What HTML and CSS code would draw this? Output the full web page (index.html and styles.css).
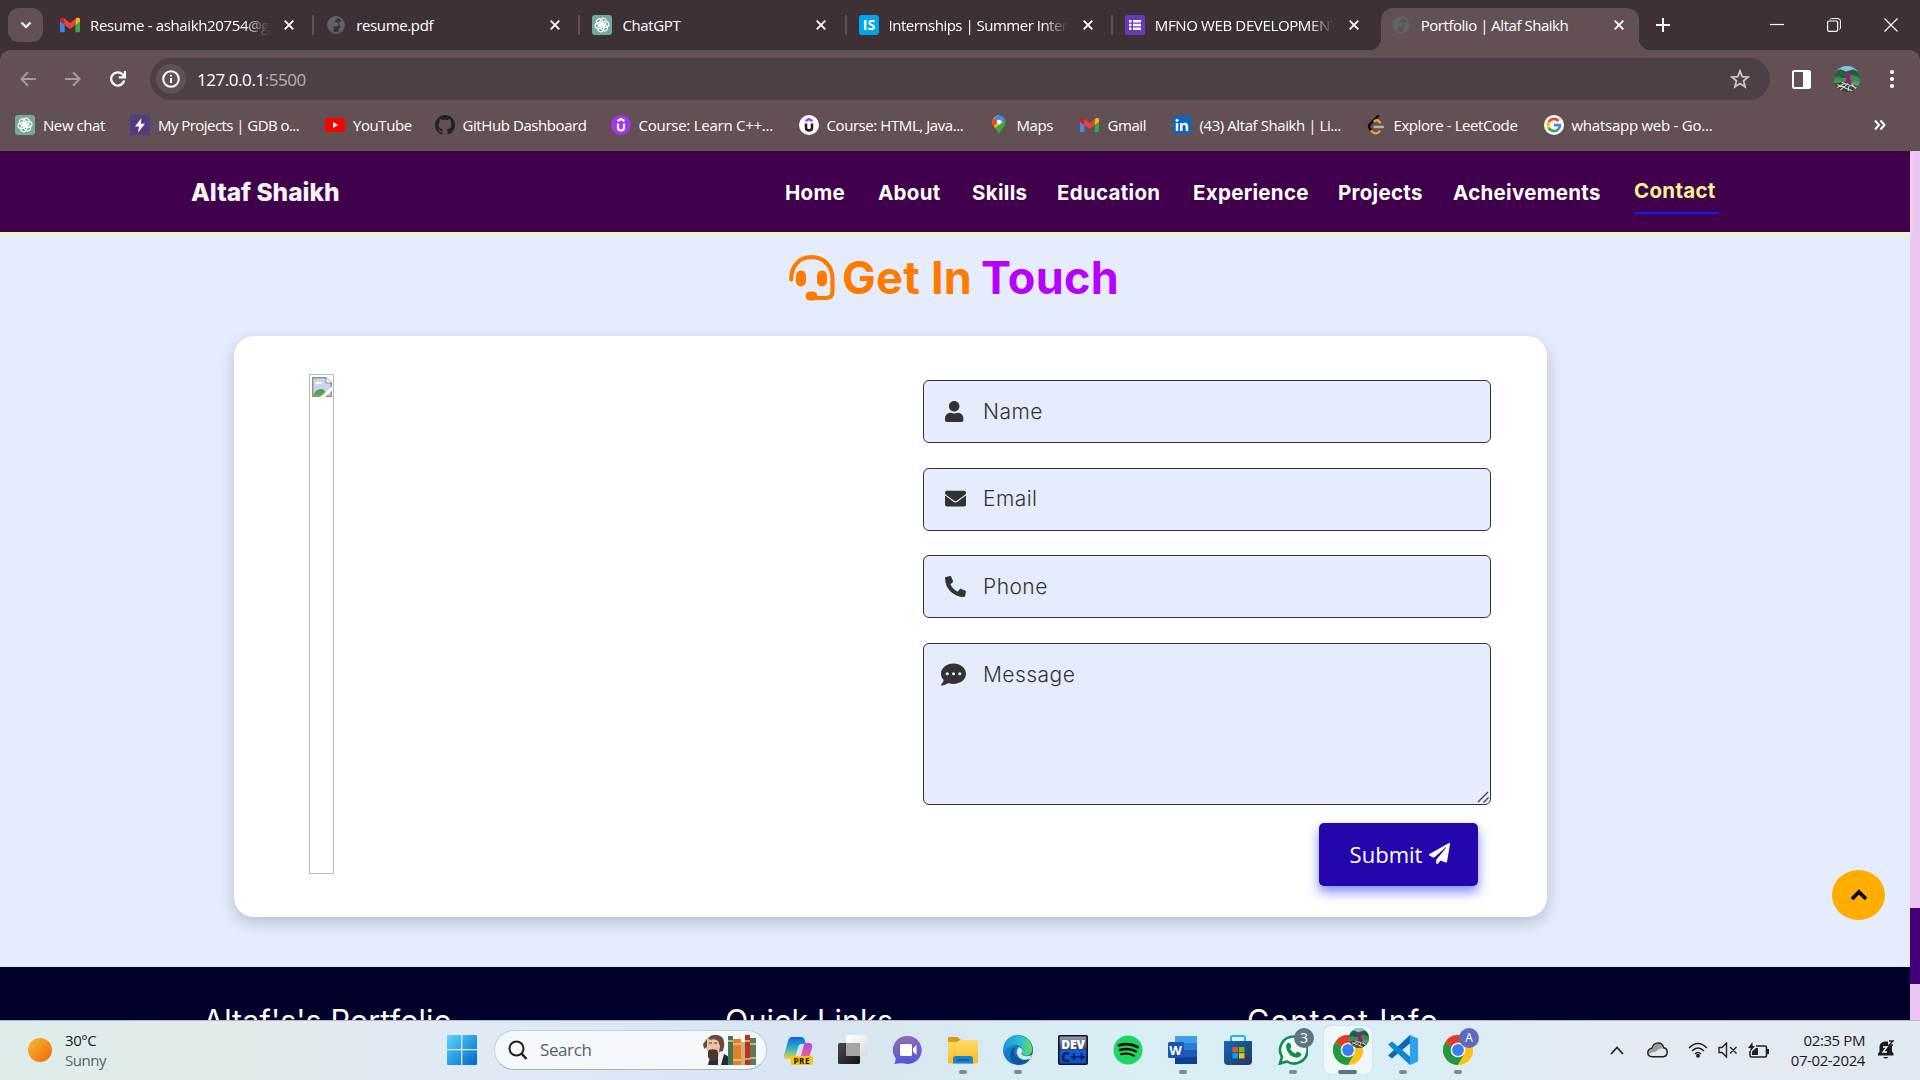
FILE: index.html
```html
<!DOCTYPE html>
<html lang="en">
<head>
<meta charset="utf-8">
<title>Portfolio | Altaf Shaikh</title>
<link rel="stylesheet" href="styles.css">
</head>
<body>
<svg class="defs" width="0" height="0">
  <defs>
    <linearGradient id="win" x1="0" y1="0" x2="1" y2="1"><stop offset="0" stop-color="#5ad6ff"/><stop offset="1" stop-color="#0067c8"/></linearGradient>
    <linearGradient id="sun" x1="0" y1="0" x2="1" y2="1"><stop offset="0" stop-color="#f0c030"/><stop offset="1" stop-color="#f5640c"/></linearGradient>
    <linearGradient id="copA" x1="0" y1="0" x2="0" y2="1"><stop offset="0" stop-color="#1a5fe0"/><stop offset=".5" stop-color="#27b4c8"/><stop offset="1" stop-color="#f0d030"/></linearGradient>
    <linearGradient id="copB" x1="0" y1="0" x2="0" y2="1"><stop offset="0" stop-color="#a04be8"/><stop offset=".6" stop-color="#ef5c9c"/><stop offset="1" stop-color="#ff9a55"/></linearGradient>
    <linearGradient id="chat" x1="0" y1="0" x2="0" y2="1"><stop offset="0" stop-color="#8f6bb0"/><stop offset="1" stop-color="#5558d8"/></linearGradient>
    <linearGradient id="fold" x1="0" y1="0" x2="0" y2="1"><stop offset="0" stop-color="#ffdc6b"/><stop offset="1" stop-color="#fcbc1c"/></linearGradient>
    <linearGradient id="edgeA" x1="0" y1="0" x2="1" y2="0"><stop offset="0" stop-color="#1b95dc"/><stop offset=".6" stop-color="#2cc0cf"/><stop offset="1" stop-color="#6cdc50"/></linearGradient>
    <linearGradient id="edgeB" x1="0" y1="0" x2="1" y2="1"><stop offset="0" stop-color="#1a9be6"/><stop offset="1" stop-color="#0c4f94"/></linearGradient>
    <linearGradient id="dev" x1="0" y1="0" x2="0" y2="1"><stop offset="0" stop-color="#9a9fb8"/><stop offset=".48" stop-color="#39446f"/><stop offset=".55" stop-color="#0d5fe0"/><stop offset="1" stop-color="#0a4fc0"/></linearGradient>
    <linearGradient id="store" x1="0" y1="0" x2="1" y2="1"><stop offset="0" stop-color="#0f6cbc"/><stop offset="1" stop-color="#26345c"/></linearGradient>
    <linearGradient id="tvA" x1="0" y1="0" x2="1" y2="1"><stop offset="0" stop-color="#4a4a4a"/><stop offset="1" stop-color="#151515"/></linearGradient>
    <linearGradient id="tvB" x1="0" y1="0" x2="1" y2="1"><stop offset="0" stop-color="#fff"/><stop offset="1" stop-color="#dcdcdc"/></linearGradient>
    <clipPath id="round"><circle cx="12" cy="12" r="12"/></clipPath>
  </defs>
  <symbol id="i-gmail" viewBox="0 0 20 15"><path d="M0 2v11.500q0 1.500 1.500 1.500H4.600V6z" fill="#4285f4"/><path d="M15.400 15h3.100q1.500 0 1.500-1.500V2l-4.600 4z" fill="#34a853"/><path d="M15.400 2.200V7.500L20 4V2.200C20 .2 17.700-.7 16.200.6z" fill="#fbbc04"/><path d="M0 2.200V4l4.600 3.500V2.200L3.800.6C2.300-.7 0 .2 0 2.200z" fill="#c5221f"/><path d="M3.800.6 10 5.400 16.200.6 15.400 7.500 10 11.600 4.600 7.500z" fill="#ea4335"/></symbol>
  <symbol id="i-globe" viewBox="0 0 20 20"><circle cx="10" cy="10" r="8" fill="none" stroke="#5f6368" stroke-width="1.800"/><path d="M2.500 7.500C4 3 7.500 2 11 2.200L10.500 5 8 6.500l3.500 1L12.500 10l-2 1.500H7L8 14l-1 3.500C4 16 1.500 12 2.500 7.500zM13 7l4.500-1C19 10 17 15 13 17l-.5-3 2-2-1-2z" fill="#5f6368"/></symbol>
  <symbol id="i-gpt" viewBox="0 0 20 20"><rect width="20" height="20" rx="3" fill="#74aa9c"/><g fill="none" stroke="#fff" stroke-width="1.150"><ellipse cx="10" cy="7" rx="3" ry="4" transform="rotate(20 10 10)"/><ellipse cx="10" cy="7" rx="3" ry="4" transform="rotate(80 10 10)"/><ellipse cx="10" cy="7" rx="3" ry="4" transform="rotate(140 10 10)"/><ellipse cx="10" cy="7" rx="3" ry="4" transform="rotate(200 10 10)"/><ellipse cx="10" cy="7" rx="3" ry="4" transform="rotate(260 10 10)"/><ellipse cx="10" cy="7" rx="3" ry="4" transform="rotate(320 10 10)"/></g></symbol>
  <symbol id="i-x" viewBox="0 0 10 10"><path d="M.7.7 9.300 9.300M9.300.7.7 9.300" stroke="#fff" stroke-width="1.800" fill="none"/></symbol>
  <symbol id="i-chrome" viewBox="0 0 30 30"><circle cx="15" cy="15" r="15" fill="#fbbc04"/><path d="M15 15 2 7.500A15 15 0 0 1 28 7.500H15z" fill="#e33b2e"/><path d="M2 7.500A15 15 0 0 0 15 30l6.500-11.300L15 15z" fill="#23983f"/><path d="M28 7.500A15 15 0 0 1 15 30l6.500-11.300L20 9z" fill="#fbc116"/><circle cx="15" cy="15" r="7.300" fill="#fff"/><circle cx="15" cy="15" r="5.900" fill="#3a7ded"/></symbol>
  <symbol id="i-avatar" viewBox="0 0 24 24"><g clip-path="url(#round)"><rect width="24" height="24" fill="#5c9b62"/><path d="M0 0h24v5L0 6z" fill="#7ec6e4"/><path d="M0 5l6-2 5 2 7-2 6 3v5H0z" fill="#245e40"/><path d="M0 11q4-3 7 0t5-1 12 1v3H0z" fill="#3f8a4c"/><path d="M0 24V16l12-2 12 6v4z" fill="#37443b"/><path d="M1 21l9-5M5 23l8-7M13 23l1-6M21 22l-5-6M3 17l14 6M7 15l14 5" stroke="#d5d9c8" stroke-width="1"/><path d="M11 6h4v6l2 4h-6z" fill="#9b1d77"/></g></symbol>
</svg>

<header class="tabs">
  <button class="tab-search"><svg width="12" height="8" viewBox="0 0 12 8"><path d="M1.500 1.500 6 6l4.500-4.500" fill="none" stroke="#fff" stroke-width="2.200"/></svg></button>
  <div class="tab"><svg class="fav" viewBox="0 0 20 20"><use href="#i-gmail" width="20" height="15" y="2.500"/></svg><span class="fade">Resume - ashaikh20754@g</span><svg class="close"><use href="#i-x"/></svg></div>
  <div class="tab"><svg class="fav"><use href="#i-globe"/></svg><span>resume.pdf</span><svg class="close"><use href="#i-x"/></svg></div>
  <div class="tab"><svg class="fav"><use href="#i-gpt"/></svg><span>ChatGPT</span><svg class="close"><use href="#i-x"/></svg></div>
  <div class="tab"><svg class="fav" viewBox="0 0 20 20"><rect width="20" height="20" rx="3" fill="#00a5ec"/><text x="10" y="15" text-anchor="middle" class="is">IS</text></svg><span class="fade tight">Internships | Summer Intern</span><svg class="close"><use href="#i-x"/></svg></div>
  <div class="tab last"><svg class="fav" viewBox="0 0 20 20"><rect width="20" height="20" rx="2" fill="#673ab7"/><path d="M4 5h2.500v2.500H4zm4 0h8v2.500H8zM4 8.800h2.500v2.500H4zm4 0h8v2.500H8zM4 12.600h2.500v2.500H4zm4 0h8v2.500H8z" fill="#fff"/></svg><span class="fade">MFNO WEB DEVELOPMENT</span><svg class="close"><use href="#i-x"/></svg></div>
  <div class="tab active"><svg class="fav"><use href="#i-globe"/></svg><span>Portfolio | Altaf Shaikh</span><svg class="close"><use href="#i-x"/></svg></div>
  <svg class="plus" width="14" height="14"><path d="M7 0v14M0 7h14" stroke="#fff" stroke-width="2"/></svg>
  <div class="winctl">
    <svg width="14" height="14"><path d="M0 6.500h14" stroke="#fff" stroke-width="1.200"/></svg>
    <svg width="14" height="14" fill="none" stroke="#fff"><rect x=".6" y="3" width="10" height="10.400" rx="1.500" stroke-width="1.200"/><path d="M3 1.600Q3.400.6 4.500.6H11Q13.400.6 13.400 3v7q0 1-1 1.500"/></svg>
    <svg width="14" height="14"><path d="M.5.5l13 13M13.500.5l-13 13" stroke="#fff" stroke-width="1.200"/></svg>
  </div>
</header>

<div class="toolbar">
  <div class="navbtns">
    <svg width="16" height="16" fill="none" stroke="#a39a9d" stroke-width="2"><path d="M16 8H1.500M8 1.200 1.300 8 8 14.800"/></svg>
    <svg width="16" height="16" fill="none" stroke="#a39a9d" stroke-width="2"><path d="M0 8h14.500M8 1.200 14.700 8 8 14.800"/></svg>
    <svg width="16" height="16" viewBox="0 0 16 16" fill="none" stroke="#fff" stroke-width="2.300"><path d="M14.200 9.500A6.600 6.600 0 1 1 12.500 3.300L14.500 5.500"/><path d="M15 0v6.300H8.800"/></svg>
  </div>
  <div class="omnibox">
    <i class="info"><svg width="18" height="18" viewBox="0 0 18 18"><circle cx="9" cy="9" r="7.800" fill="none" stroke="#fff" stroke-width="2"/><path d="M9 8v5M9 4.800v1.800" stroke="#fff" stroke-width="1.900"/></svg></i>
    <span class="url">127.0.0.1<b>:5500</b></span>
    <svg class="star" width="20" height="20" viewBox="0 0 20 20"><path d="M10 2l2.200 5.600 6 .4-4.600 3.900 1.500 5.900L10 14.500l-5.100 3.300 1.500-5.900L1.800 8l6-.4z" fill="none" stroke="#cbc5c8" stroke-width="1.800"/></svg>
  </div>
  <svg class="panel" width="19" height="19"><rect x="1" y="1" width="17" height="17" rx="1.500" fill="none" stroke="#fff" stroke-width="2"/><path d="M11 1h7v17h-7z" fill="#fff"/></svg>
  <svg class="avatar" width="26" height="26"><use href="#i-avatar"/></svg>
  <svg width="6" height="20" fill="#fff"><circle cx="3" cy="3" r="2.100"/><circle cx="3" cy="10" r="2.100"/><circle cx="3" cy="17" r="2.100"/></svg>
</div>

<div class="bookmarks">
  <div><svg><use href="#i-gpt"/></svg><span>New chat</span></div>
  <div><svg viewBox="0 0 20 20"><rect width="20" height="20" fill="#553b80"/><path d="M11.500 3 5 11.500h4L8 17.500 15 8.800h-4.200z" fill="#fff"/></svg><span class="narrow">My Projects | GDB o...</span></div>
  <div><svg viewBox="0 0 20 20"><rect y="3" width="20" height="14" rx="3" fill="#f00"/><path d="M8 7v6l5.200-3z" fill="#fff"/></svg><span>YouTube</span></div>
  <div><svg viewBox="0 0 16 16"><path d="M8 0C3.580 0 0 3.580 0 8c0 3.540 2.290 6.530 5.470 7.590.4.070.55-.17.55-.38 0-.19-.01-.82-.01-1.490-2.010.37-2.530-.49-2.690-.94-.09-.23-.48-.94-.82-1.130-.28-.15-.68-.52-.01-.53.63-.01 1.080.58 1.230.82.72 1.210 1.870.87 2.330.66.070-.52.28-.87.51-1.070-1.780-.2-3.640-.89-3.640-3.950 0-.87.31-1.590.82-2.150-.08-.2-.36-1.020.08-2.120 0 0 .67-.21 2.200.82.640-.18 1.320-.27 2-.27s1.360.09 2 .27c1.530-1.040 2.200-.82 2.200-.82.440 1.100.16 1.920.08 2.120.51.560.82 1.270.82 2.150 0 3.070-1.870 3.750-3.650 3.950.29.25.54.73.54 1.480 0 1.070-.01 1.930-.01 2.200 0 .21.15.46.55.38A8 8 0 0 0 16 8c0-4.420-3.580-8-8-8z" fill="#1f2328"/></svg><span>GitHub Dashboard</span></div>
  <div><svg viewBox="0 0 20 20"><circle cx="10" cy="10" r="10" fill="#a435f0"/><path d="M6.500 6 10 4l3.500 2M7 8.500v4.300q0 2.700 3 2.700t3-2.700V8.500" fill="none" stroke="#fff" stroke-width="2.200"/></svg><span class="wide">Course: Learn C++...</span></div>
  <div><svg viewBox="0 0 20 20"><circle cx="10" cy="10" r="10" fill="#fff"/><path d="M6.500 6 10 4l3.500 2" fill="none" stroke="#a435f0" stroke-width="2.200"/><path d="M7 8.500v4.300q0 2.700 3 2.700t3-2.700V8.500" fill="none" stroke="#1c1d1f" stroke-width="2.500"/></svg><span>Course: HTML, Java...</span></div>
  <div><svg viewBox="0 0 20 20"><path d="M3.500 7a6.500 6.500 0 0 1 13 0c0 5-5 7-6.500 12.500C8.500 14 3.500 12 3.500 7z" fill="#34a853"/><path d="M3.500 7C3.500 3 6.500.5 10 .5L14 7 6 13C4.500 11 3.500 9.500 3.500 7z" fill="#fbbc04"/><path d="M5 3.200 10 7l-5.500 4C3 8 3 5.500 5 3.200z" fill="#ea4335"/><path d="M5 3.200Q7 .5 10 .5c3 0 5 1.500 6 4L10 7z" fill="#4285f4"/><circle cx="10" cy="7" r="2.300" fill="#fff"/></svg><span>Maps</span></div>
  <div><svg viewBox="0 0 20 20"><use href="#i-gmail" width="19" height="14.500" y="2.700"/></svg><span>Gmail</span></div>
  <div><svg viewBox="0 0 20 20"><rect x="1" y="1" width="18" height="18" rx="1.500" fill="#0a66c2"/><path d="M3.800 8h2.500v8H3.800zM8 8h2.400v1.200c1.600-2.300 5.800-1.700 5.800 2V16h-2.500v-4.300c0-2.300-3.200-2.200-3.200 0V16H8z" fill="#fff"/><circle cx="5" cy="5.300" r="1.500" fill="#fff"/></svg><span>(43) Altaf Shaikh | Li...</span></div>
  <div><svg viewBox="0 0 20 20" fill="none" stroke-width="2.300" stroke-linecap="round"><path d="M12 1 3.700 9.500q-1.700 2 0 4l2 2.500" stroke="#000"/><path d="M5.500 16q4 4.500 8 .5M8.500 6q3-2 5.500 1.500" stroke="#ffa116"/><path d="M8.500 12H17" stroke="#b3b3b3"/></svg><span>Explore - LeetCode</span></div>
  <div><svg viewBox="0 0 20 20"><circle cx="10" cy="10" r="10" fill="#fff"/><g fill="none" stroke-width="2.700"><path d="M14.500 6A6 6 0 0 0 4.800 7" stroke="#ea4335"/><path d="M4.800 7a6 6 0 0 0 0 6" stroke="#fbbc04"/><path d="M4.800 13a6 6 0 0 0 9.200 1.500" stroke="#34a853"/><path d="M14 14.500q2-1.700 2-4.300h-6" stroke="#4285f4"/></g></svg><span class="wide">whatsapp web - Go...</span></div>
  <svg class="more" viewBox="0 0 12 12"><path d="M1 1.500 5 6 1 10.500M6.500 1.500l4 4.500-4 4.500" fill="none" stroke="#fff" stroke-width="2"/></svg>
</div>

<div class="view">
  <main class="page">
    <nav class="nav">
      <a class="logo">Altaf Shaikh</a>
      <a>Home</a><a>About</a><a>Skills</a><a>Education</a><a>Experience</a><a>Projects</a><a>Acheivements</a><a class="current">Contact</a>
    </nav>
    <section class="contact">
      <h2>
        <svg width="46" height="46" viewBox="0 0 46 46"><path d="M2.200 24.500C2.200 11 10 2.200 22.500 2.200S43.500 11 43.500 24v12.500q0 6.500-6.500 6.500H23" fill="none" stroke="#ff7b00" stroke-width="4.200" stroke-linecap="round"/><rect x="7" y="15.500" width="10" height="16" rx="5" fill="#ff7b00"/><rect x="28" y="15.500" width="10" height="16" rx="5" fill="#ff7b00"/><rect x="16.500" y="36.500" width="12" height="9" rx="4.500" fill="#ff7b00"/></svg>
        <span class="get">Get In</span> <span class="touch">Touch</span>
      </h2>
      <div class="card">
        <div class="picture"><svg width="20" height="20" viewBox="0 0 20 20"><path d="M.7.700h13L19.300 6v13.300H.7z" fill="#c6d6f4" stroke="#8f8f8f" stroke-width="1.400"/><path d="M14 .7V6h5.300" fill="#fff" stroke="#8f8f8f"/><path d="M3 7q1-3 4-2 3-1 3 2z" fill="#fff"/><path d="M1.500 18.500q2-7 8-6.500 4 .5 5 6.500z" fill="#52a83a"/><path d="M8 20 20 9.500v4L13 20z" fill="#fff"/></svg></div>
        <form class="form">
          <div class="field"><svg class="ic" viewBox="0 0 512 512"><path d="M224 256c70.700 0 128-57.300 128-128S294.700 0 224 0 96 57.300 96 128s57.300 128 128 128zm89.600 32h-16.700c-22.200 10.200-46.900 16-72.900 16s-50.600-5.800-72.900-16h-16.700C60.200 288 0 348.200 0 422.400V464c0 26.500 21.500 48 48 48h352c26.500 0 48-21.500 48-48v-41.600c0-74.200-60.200-134.400-134.400-134.400z"/></svg><span>Name</span></div>
          <div class="field"><svg class="ic" viewBox="0 0 512 512"><path d="M502.300 190.800c3.900-3.100 9.700-.2 9.700 4.700V400c0 26.500-21.500 48-48 48H48c-26.500 0-48-21.500-48-48V195.600c0-5 5.700-7.800 9.700-4.700 22.400 17.400 52.100 39.500 154.100 113.600 21.100 15.400 56.700 47.800 92.200 47.600 35.700.3 72-32.800 92.300-47.600 102-74.100 131.600-96.300 154-113.700zM256 320c23.200.4 56.600-29.200 73.400-41.400 132.700-96.300 142.800-104.700 173.400-128.700 5.800-4.500 9.200-11.500 9.200-18.900v-19c0-26.500-21.500-48-48-48H48c-26.500 0-48 21.500-48 48v19c0 7.400 3.400 14.300 9.200 18.900 30.600 23.900 40.700 32.400 173.400 128.700 16.800 12.200 50.200 41.800 73.400 41.400z"/></svg><span>Email</span></div>
          <div class="field"><svg class="ic" viewBox="0 0 512 512"><path d="M497.390 361.800l-112-48a24 24 0 0 0-28 6.900l-49.600 60.600A370.660 370.660 0 0 1 130.600 204.110l60.600-49.600a23.940 23.940 0 0 0 6.900-28l-48-112A24.160 24.160 0 0 0 122.600.610l-104 24A24 24 0 0 0 0 48c0 256.500 207.900 464 464 464a24 24 0 0 0 23.400-18.600l24-104a24.290 24.290 0 0 0-14.010-27.600z"/></svg><span>Phone</span></div>
          <div class="field message"><svg class="ic big" viewBox="0 0 512 512"><path fill-rule="evenodd" d="M256 32C114.600 32 0 125.100 0 240c0 49.600 21.400 95 57 130.700C44.500 421.100 2.700 466 2.200 466.500c-2.200 2.300-2.800 5.700-1.500 8.700S4.800 480 8 480c66.300 0 116-31.800 140.600-51.400 32.700 12.300 69 19.400 107.400 19.400 141.400 0 256-93.100 256-208S397.400 32 256 32zM128 272a32 32 0 1 1 0-64 32 32 0 0 1 0 64zm128 0a32 32 0 1 1 0-64 32 32 0 0 1 0 64zm128 0a32 32 0 1 1 0-64 32 32 0 0 1 0 64z"/></svg><span>Message</span><svg class="grip" width="12" height="12"><path d="M1 11 11 1M6.500 11.500l5-5" stroke="#444" stroke-width="1.400"/></svg></div>
          <div class="submit">Submit <svg width="21" height="21" viewBox="0 0 512 512"><path d="M476 3.200L12.500 270.600c-18.100 10.400-15.800 35.600 2.200 43.200L121 358.400l287.300-253.200c5.500-4.900 13.300 2.600 8.600 8.300L176 407v80.500c0 23.600 28.500 32.900 42.500 15.800L282 426l124.600 52.200c14.200 6 30.400-2.900 33-18.200l72-432C515 7.800 493.300-6.800 476 3.200z" fill="#fff"/></svg></div>
        </form>
      </div>
      <div class="top"><svg width="18" height="12" viewBox="0 0 18 12"><path d="M2 10l7-7 7 7" fill="none" stroke="#06002a" stroke-width="3.800"/></svg></div>
    </section>
    <footer class="footer"><h3>Altaf's's Portfolio</h3><h3>Quick Links</h3><h3 class="info-title">Contact Info</h3></footer>
  </main>
  <div class="scroll"><div class="thumb"></div></div>
</div>

<div class="taskbar">
  <div class="weather"><svg width="24" height="24"><circle cx="12" cy="12" r="12" fill="url(#sun)"/></svg><p>30°C<br><span>Sunny</span></p></div>
  <svg class="start" width="30" height="30" viewBox="0 0 30 30"><path d="M0 1q0-1 1-1h13v14H0zM15.300 0H29q1 0 1 1v13H15.300zM0 15.300h14V30H1q-1 0-1-1zM15.300 15.300H30V29q0 1-1 1H15.300z" fill="url(#win)"/></svg>
  <div class="search">
    <svg width="20" height="20" viewBox="0 0 20 20"><circle cx="8.500" cy="8.500" r="7" fill="none" stroke="#222" stroke-width="2"/><path d="M13.500 13.500 18.500 19" stroke="#222" stroke-width="2.600"/></svg>
    <span>Search</span>
    <svg class="books" width="54" height="32" viewBox="0 0 54 32"><path d="M6 31q1-9 8-10l8-1q7 3 9 11z" fill="#252b3c"/><path d="M16 17l6 3-3 11h-3z" fill="#e9edf2"/><path d="M4 5Q12-1 19 4q3 4 1 10l-3 6H8L4 15z" fill="#e8c4a8"/><path d="M6 4Q12-2 20 3q4 5 1 14l-4 1 1-6-2-5q-3-3-8-1zM1 10l4-5 0 8-3 2z" fill="#6b4b35"/><path d="M6 17q2-3 9-1 3 6-1 11-6 1-8-4z" fill="#4b3727"/><path d="M7 9h3M12 9h3" stroke="#4b3727" stroke-width="1.200"/><path d="M26 2h5v29h-5z" fill="#3c7b55"/><path d="M31 5h8v26h-8z" fill="#e0822a"/><path d="M39 8h4v23h-4z" fill="#d9ae74"/><path d="M43 1h5v30h-5z" fill="#b93228"/><path d="M48 4h6v27h-6z" fill="#5e7958"/><path d="M26 7h5M31 10h8M31 26h8M43 7h5M43 25h5M48 10h6M48 24h6" stroke="#efc978" stroke-width="1.500"/></svg>
  </div>
  <div class="apps">
    <div class="app"><svg viewBox="0 0 30 30"><path d="M9 2h9q3 0 4 4l1 3h-5q-2 0-3 4l-3 9q-1 2-4 2H4q-4 0-3-4L5 6q1-4 4-4z" fill="url(#copA)"/><path d="M23 8h3q4 0 3 5l-4 13q-1 3-5 3h-8q4 0 5-5l3-11q1-5 3-5z" fill="url(#copB)"/><rect x="7.500" y="21" width="22.500" height="9" rx="2" fill="#fcc40f"/><text x="18.800" y="28.600" text-anchor="middle" class="pre">PRE</text></svg></div>
    <div class="app"><svg viewBox="0 0 30 30"><rect x="0" y="8" width="22" height="21" rx="1.500" fill="url(#tvA)"/><rect x="8" y="0" width="22" height="21" rx="1.500" fill="url(#tvB)"/><path d="M8 8h14v13H8z" fill="#a5a5a5"/></svg></div>
    <div class="app"><svg viewBox="0 0 30 30"><path d="M15 1a14 14 0 1 1-4 27.500Q7 28 1 29q2-2 1.500-6A14 14 0 0 1 15 1z" fill="url(#chat)"/><rect x="7" y="9" width="12" height="12" rx="1.500" fill="#fff"/><path d="M20 13.500 23.500 10v10l-3.500-3.500z" fill="#fff"/></svg></div>
    <div class="app run"><svg viewBox="0 0 30 30"><path d="M0 3q0-1 2-1h7q1.500 0 2 1.500L13 5v4H0z" fill="#dc9a0c"/><path d="M0 7h9l3-2h18v22q0 1.500-1.500 1.500h-27Q0 28.500 0 27z" fill="url(#fold)"/><path d="M5 28.500V24q0-3 3-3h14q3 0 3 3v4.500z" fill="#1583d2"/><path d="M9 25h12" stroke="#0b5590" stroke-width="1.500"/></svg></div>
    <div class="app run"><svg viewBox="0 0 30 30"><circle cx="15" cy="15" r="15" fill="url(#edgeB)"/><path d="M1 11C4-2 23-3 28 9c5 12-7 14-10 10 4-4 0-9-5-9-6 0-11 4-12 8z" fill="url(#edgeA)"/><path d="M12 12c-3 8 2 16 15 12-3 5-9 7-14 5-7-3-8-14-1-17z" fill="#0d579f"/><path d="M14 19q-1-4 2-7 6 3 2 7 3 4 11 1l-2 4Q17 27 14 19z" fill="#dbeaf2"/></svg></div>
    <div class="app"><svg viewBox="0 0 30 30"><rect x=".8" y=".8" width="28.400" height="28.400" rx="1" fill="url(#dev)" stroke="#14151f" stroke-width="1.600"/><text x="15" y="13.500" text-anchor="middle" class="dv">DEV</text><text x="15.500" y="27" text-anchor="middle" class="cpp">C++</text></svg></div>
    <div class="app"><svg viewBox="0 0 30 30"><circle cx="15" cy="15" r="14.500" fill="#1ed760"/><g fill="none" stroke="#0b0b0b" stroke-linecap="round"><path d="M6 10.300q10-3 18.500 1.700" stroke-width="2.900"/><path d="M7 15q9-2.500 16 1.500" stroke-width="2.500"/><path d="M8 19.300q7-2 13 1.500" stroke-width="2"/></g></svg></div>
    <div class="app run"><svg viewBox="0 0 30 30"><path d="M7 1h22v7H7z" fill="#3fa0ea"/><path d="M7 8h22v7H7z" fill="#2b7cd3"/><path d="M7 15h22v7H7z" fill="#185abd"/><path d="M7 22h22v7H7z" fill="#103f91"/><rect x="0" y="7" width="16" height="16" rx="1.500" fill="#1a56b0"/><text x="7.500" y="19.500" text-anchor="middle" class="w">W</text></svg></div>
    <div class="app"><svg viewBox="0 0 30 30"><path d="M8 7V2.500Q8 1 9.500 1h11Q22 1 22 2.500V7" fill="none" stroke="#28b0ee" stroke-width="2"/><path d="M1 6h28v20q0 4-4 4H5q-4 0-4-4z" fill="url(#store)"/><path d="M9.500 12H15v5.200H9.500z" fill="#f25022"/><path d="M16 12h5.500v5.200H16z" fill="#7fba00"/><path d="M9.500 18.200H15v5.200H9.500z" fill="#00a4ef"/><path d="M16 18.200h5.500v5.200H16z" fill="#ffb900"/></svg></div>
    <div class="app run"><svg viewBox="0 0 30 30"><path d="M15.500 1.500a13.500 13.500 0 1 1-6.500 25L2 28.500 4 22A13.500 13.500 0 0 1 15.500 1.500z" fill="#effaf5" stroke="#128c53" stroke-width="2.600"/><path d="M9.500 8q2-1 3 1l1 2.500-1.500 2.200q2 3.500 5.500 4.800l2-2 3.800 2q0 4-4.300 4.200-9-1-11-10.500 0-3 1.500-4.200z" fill="#128c53"/></svg><i class="badge">3</i></div>
    <div class="app run on"><svg><use href="#i-chrome"/></svg><i class="badge"><svg><use href="#i-avatar"/></svg></i></div>
    <div class="app run"><svg viewBox="0 0 30 30"><path d="M22 0 30 3.500v23L22 30z" fill="#2aa4ee"/><path d="M22 0v8.500L4 23.500 0 20.500z" fill="#0a6ab4"/><path d="M22 30v-8.500L4 6.500 0 9.500z" fill="#0f86d2"/></svg></div>
    <div class="app run"><svg><use href="#i-chrome"/></svg><i class="badge a">A</i></div>
  </div>
  <div class="tray">
    <svg width="14" height="9"><path d="M1 8l6-6.500L13 8" fill="none" stroke="#222" stroke-width="1.800"/></svg>
    <svg width="21" height="16" viewBox="0 0 21 16"><path d="M5 14.800q-4.200-.3-4.200-4.200Q1 7 4.800 6.500 6.500 1 11 1q4.500 0 5.700 4.800 3.500.5 3.500 4.500t-4 4.500z" fill="#e4e4e4" stroke="#222" stroke-width="1.500"/><path d="M2 12 Q1 7.500 5.300 7.200 6.500 1.800 11 1.800q4 0 5 4.500Q11 6.500 9 9.500 5 9.500 2 12z" fill="#9b9b9b"/></svg>
    <svg width="20" height="16" viewBox="0 0 20 16" fill="none" stroke="#222" stroke-width="1.500"><path d="M1 6q9-9 18 0M4 9q6-6 12 0M7 12q3-3 6 0"/><circle cx="10" cy="13.800" r="1.200" fill="#222"/></svg>
    <svg width="20" height="16" viewBox="0 0 20 16" fill="none" stroke="#222" stroke-width="1.400"><path d="M1 5.500h3L8.500 1v14L4 10.500H1zM12 5l6.500 6.500M18.500 5 12 11.500"/></svg>
    <svg width="21" height="17" viewBox="0 0 21 17"><path d="M8 4h9q1.500 0 1.500 1.500v8q0 1.500-1.500 1.500H3.500Q2 15 2 13.500V9" fill="none" stroke="#222" stroke-width="1.600"/><path d="M19 7h2v5h-2zM4 9.500 8 6h2v7H4z" fill="#222"/><path d="M4.500 0 0 6h2.700L2 10l5-6H4.500z" fill="#222"/></svg>
    <p>02:35 PM<br>07-02-2024</p>
    <svg width="18" height="20" viewBox="0 0 18 20"><path d="M1 15.500v-2l1.500-2V7q0-5 5.500-5.500h3v4h4V11.500l1.500 2v2zM6 17h5.500q-2.700 3-5.500 0z" fill="#1b1b1b"/><path d="M12 1h4l-4 4h4" fill="none" stroke="#1b1b1b" stroke-width="1.300"/><path d="M6 7h4l-4 5h4" fill="none" stroke="#fff" stroke-width="1.300"/></svg>
  </div>
</div>
</body>
</html>
```
FILE: styles.css
```css
* { box-sizing: border-box; }
body { margin: 0; width: 1920px; height: 1080px; overflow: hidden; display: flex; flex-direction: column; background: #3d3135; font-family: "Open Sans", "Noto Sans", sans-serif; color: #fff; }
svg { flex: none; display: block; }
.defs { position: absolute; }
p { margin: 0; }
i { font-style: normal; }

/* Tab strip */
.tabs { height: 50px; flex: none; background: #3d3135; display: flex; align-items: center; padding-left: 8px; font-size: 15px; letter-spacing: -.36px; }
.tab-search { width: 35px; height: 34px; padding: 0; border: 0; border-radius: 11px; background: #625055; display: flex; align-items: center; justify-content: center; margin-right: 17px; }
.tab { width: 266.200px; height: 42px; flex: none; display: flex; align-items: center; padding-right: 18px; position: relative; }
.tab::after { content: ""; position: absolute; right: 12px; top: 11px; width: 2px; height: 20px; background: #625055; }
.tab.last { width: 254px; padding-right: 5px; }
.tab.last::after, .tab.active::after { display: none; }
.tab .fav { width: 20px; height: 20px; margin-right: 10px; }
.tab span { width: 181px; flex: none; white-space: nowrap; overflow: hidden; line-height: 24px; }
.tab span.tight { letter-spacing: -.5px; }
.tab .fade { -webkit-mask-image: linear-gradient(90deg, #000 85%, transparent 99%); mask-image: linear-gradient(90deg, #000 85%, transparent 99%); }
.tab .close { width: 10px; height: 10px; margin-left: 13px; }
.tab.active { width: 258px; height: 42px; margin-top: 8px; margin-left: 2px; padding: 0 0 8px 10px; border-radius: 12px 12px 0 0; background: #625055; }
.tab.active span { letter-spacing: -.47px; }
.tab.active .close { margin-left: 12px; }
.tab.active::before { content: ""; position: absolute; left: -12px; right: -12px; bottom: 0; height: 12px; background: radial-gradient(circle at 0 0, transparent 12px, #625055 12.500px) left / 12px 12px no-repeat, radial-gradient(circle at 100% 0, transparent 12px, #625055 12.500px) right / 12px 12px no-repeat; }
.is { font: bold 14px "Open Sans", sans-serif; fill: #fff; letter-spacing: 0; }
.plus { margin-left: 17px; }
.winctl { margin-left: auto; padding-right: 22px; display: flex; gap: 43px; }

/* Address bar */
.toolbar { height: 50px; flex: none; padding: 8px 25px 0 20px; background: #625055; display: flex; align-items: center; border-radius: 10px 10px 0 0; }
.navbtns { width: 130px; flex: none; display: flex; gap: 29px; }
.omnibox { width: 1620px; flex: none; height: 42px; border-radius: 21px; background: #4c4046; display: flex; align-items: center; padding: 0 20px 0 6px; }
.info { width: 30px; height: 30px; border-radius: 50%; background: #625055; display: flex; align-items: center; justify-content: center; margin-right: 11px; }
.url { font-size: 17px; letter-spacing: -.45px; }
.url b { font-weight: 400; color: #b9b1b4; }
.star { margin-left: auto; }
.panel { margin: 0 23px 0 22px; }
.avatar { margin-right: 29px; }

/* Bookmarks */
.bookmarks { height: 51px; flex: none; background: #625055; border-bottom: 1px solid #5c514f; padding-left: 15px; display: grid; grid-template-columns: 115px 195px 109.500px 176px 188px 190px 91px 92px 194px 178px 330px 12px; align-items: center; font-size: 15px; letter-spacing: -.42px; white-space: nowrap; }
.bookmarks div { display: flex; align-items: center; gap: 8px; }
.bookmarks div svg { width: 20px; height: 20px; }
.bookmarks span { margin-top: -1px; line-height: 20px; }
.bookmarks .narrow { letter-spacing: -.55px; }
.bookmarks .wide { letter-spacing: -.25px; }
.more { width: 12px; height: 12px; }

/* Web page */
.view { height: 869px; flex: none; display: flex; overflow: hidden; }
.page { width: 1910px; background: #e5ecfb; display: flex; flex-direction: column; font-family: Inter, sans-serif; }
.nav { height: 81px; flex: none; background: #40004b; box-shadow: 0 2px 4px #f4f8a8; display: grid; grid-template-columns: 594px 93px 94px 85px 136px 145px 115px 181px 90px; padding: 1px 0 0 191px; align-items: center; font-size: 20.500px; font-weight: 700; letter-spacing: .3px; position: relative; }
.logo { font-size: 24.500px; font-weight: 800; letter-spacing: 0; color: #f5f5f5; }
.nav .current { color: #f1f58f; width: 85px; padding: 12px 0 9px; margin-top: -4px; border-bottom: 2px solid #0f1cff; line-height: 24px; }
.contact { height: 735px; flex: none; position: relative; padding-left: 234px; }
h2 { margin: 0 0 0 555px; height: 104px; padding-top: 23px; display: flex; align-items: flex-start; font-size: 45px; font-weight: 700; line-height: 46px; letter-spacing: .3px; }
.get { color: #ff7b00; margin-left: 7px; width: 139px; white-space: nowrap; }
.touch { color: #b800ff; }
.card { width: 1313px; height: 581px; border-radius: 20px; background: #fff; box-shadow: 0 6px 16px rgba(0, 20, 60, .2); display: flex; justify-content: space-between; padding: 38px 56px 0 75px; }
.picture { width: 25px; height: 500px; border: 1px solid #b9b9b9; padding: 2px; }
.form { width: 568px; padding-top: 6px; display: flex; flex-direction: column; }
.field { height: 63px; margin-bottom: 24.500px; border: 1px solid #333; border-radius: 6px; background: #e5ecfb; display: flex; align-items: center; padding: 0 0 1px 21px; color: #333; font-size: 21px; font-weight: 300; letter-spacing: .45px; position: relative; flex: none; }
.ic { width: 21px; height: 21px; margin-right: 17px; fill: #333; }
.ic.big { width: 25px; height: 25px; margin: 0 17px 0 -4px; }
.message { height: 162px; align-items: flex-start; padding-top: 18px; margin-bottom: 18px; }
.grip { position: absolute; right: 1px; bottom: 1px; }
.submit { align-self: flex-end; width: 159px; height: 63px; margin-right: 13px; border-radius: 5px; background: #2506ad; box-shadow: 0 6px 12px rgba(60, 70, 255, .65); display: flex; align-items: center; justify-content: center; gap: 7px; padding: 0 0 1px 3px; font: 500 22px "Open Sans", sans-serif; }
.top { position: absolute; left: 1832px; top: 638px; width: 53px; height: 50px; border-radius: 50%; background: #ffae00; display: flex; align-items: center; justify-content: center; }
.footer { flex: none; height: 113px; background: #00002a; padding: 36px 0 0 203px; display: grid; grid-template-columns: 522px 522px 400px; }
h3 { margin: 0; font-size: 30.500px; font-weight: 400; line-height: 36px; letter-spacing: .1px; }
.info-title { letter-spacing: 1.300px; }
.scroll { width: 10px; background: #ecc5f4; padding-top: 757px; }
.thumb { height: 76px; background: #440078; }

/* Taskbar */
.taskbar { height: 60px; flex: none; border-top: 1px solid #b3babf; background: linear-gradient(90deg, #ddecea 0, #e2eaea 13%, #dfeaf5 24%, #dae6f4 36%, #d9e6f0 45%, #d9edf4 55%, #d9eef5 70%, #e3eaf2 85%, #e2e9f1 100%); color: #1b1b1b; display: flex; align-items: center; padding: 0 0 1px 28px; font-size: 15px; line-height: 20px; }
.weather { width: 419px; display: flex; gap: 13px; align-items: center; letter-spacing: -.45px; }
.weather p, .tray p { margin-top: -1px; }
.weather span { color: #5c6264; }
.start { margin-right: 17px; }
.search { width: 273px; height: 40px; border-radius: 20px; border: 1px solid #c3cfdc; border-bottom-color: #a9b4c0; background: #f5f9fc; display: flex; align-items: center; padding: 0 10px 0 13px; font-size: 17px; letter-spacing: -.4px; color: #5a5f64; }
.search span { margin-left: 12px; }
.books { margin-left: auto; }
.apps { display: flex; margin-left: 3px; }
.app { width: 55px; height: 48px; position: relative; display: flex; align-items: center; justify-content: center; }
.app > svg { width: 30px; height: 30px; }
.app.run::after { content: ""; position: absolute; left: 24px; bottom: 0; width: 8px; height: 4px; border-radius: 2px; background: #7f898e; }
.app.on::before { content: ""; position: absolute; left: 3.500px; top: 0; width: 48px; height: 48px; border-radius: 6px; background: #eef7fa; box-shadow: 0 0 1px #9ab; }
.app.on > svg { position: relative; }
.app.on::after { left: 18px; width: 19px; background: #5c7486; }
.pre { font: bold 8px "Open Sans", sans-serif; letter-spacing: .6px; fill: #111; }
.dv { font: 800 12px "Open Sans", sans-serif; fill: #fff; }
.cpp { font: 800 13.500px "Open Sans", sans-serif; fill: #061c58; }
.w { font: bold 13px "Open Sans", sans-serif; fill: #fff; }
.badge { position: absolute; left: 29px; top: 2px; width: 20px; height: 20px; border-radius: 50%; background: #5f7584; color: #fff; font-size: 14px; line-height: 20px; text-align: center; }
.badge svg { width: 20px; height: 20px; }
.badge.a { background: #5c6bc0; font-size: 12px; }
.tray { margin-left: auto; padding-right: 25px; display: flex; align-items: center; letter-spacing: -.4px; }
.tray svg { margin-right: 10px; }
.tray svg:nth-child(1) { margin-right: 23px; }
.tray svg:nth-child(2) { margin-right: 20px; }
.tray p { width: 86px; text-align: right; margin-right: 12px; white-space: nowrap; }
.tray svg:last-child { margin-right: 0; }
```
